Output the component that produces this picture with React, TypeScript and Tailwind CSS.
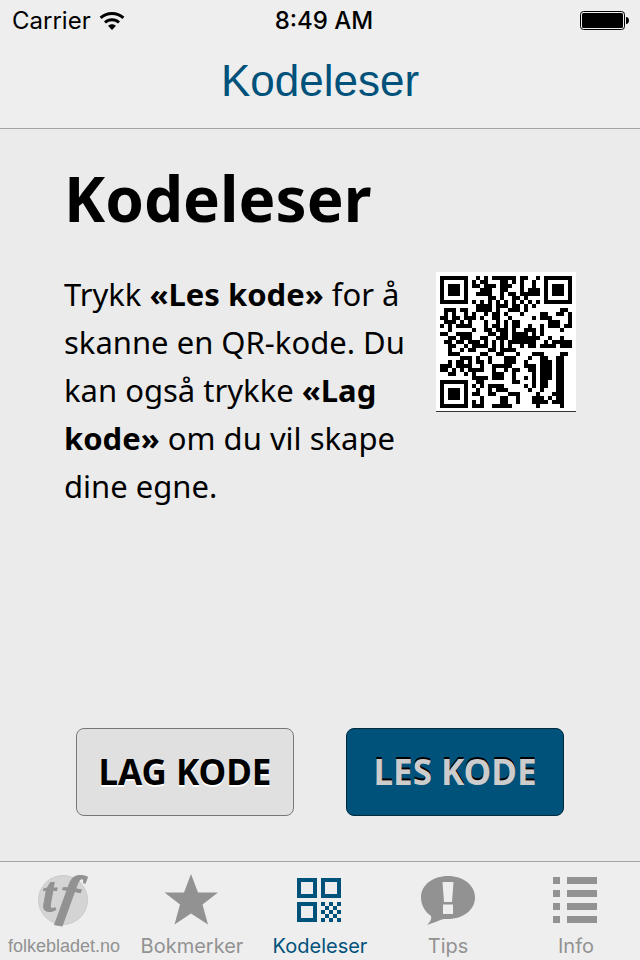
import type { ReactNode } from "react";

const QR_ROWS = [
  "#######..#.#.######.##..#.#######",
  "#.....#.#.##...##.#.#..#..#.....#",
  "#.###.#.##.###.###..#..#..#.###.#",
  "#.###.#...###..##...#.###.#.###.#",
  "#.###.#..####..#.##.#####.#.###.#",
  "#.....#.....##.#..##.#....#.....#",
  "#######.#.#.#.#.#.#.#.#.#.#######",
  ".........####.###.##.#.#.........",
  ".###.##..####.#..###.#........##.",
  ".#.#..#.#..#.##.#...#....##..##.#",
  "##.##.###.#..##..#.....#.###....#",
  ".###.#.#...#..#.#.##.......###..#",
  "#.#.####...#.##.#.##..#..#.###.##",
  "..#.....#..##.###.#..###.#....#..",
  "##..####....##.##.####.#.#.......",
  "..##.###..##..###.#######..#..#..",
  ".##.##.###.#.#.#.#######..#.#####",
  "..##..#.####.#.#.#..#.##.####.###",
  "..#..#.##...##.####..............",
  "..###.....##..##...#...###....##.",
  ".....###.#..#...###...#..##..##..",
  "..#.##.#.##.#...###..#...###.##..",
  "###.####..#..#####...###.###.##..",
  "##.#.#.####..#..#.##..##.###.##..",
  "..##..#.#....###..#....#.###.##..",
  "........####.###..#..#.#.###.##..",
  "#######..##.......##...#.##..##..",
  "#.....#.#.#.####.....#.#.##..##..",
  "#.###.#..#..#.###.....#..#...##..",
  "#.###.#.##..##...###....#...###..",
  "#.###.#...#....##..#...###.#.##..",
  "#.....#.#.#....##..#...####.###..",
  "#######.###..#####......#.....#..",
];

function QrCode() {
  const d = QR_ROWS.map((row, y) =>
    [...row].map((c, x) => (c === "#" ? `M${x * 4 + 4} ${y * 4 + 4}h4v4h-4z` : "")).join("")
  ).join("");
  return (
    <svg
      viewBox="0 0 140 140"
      role="img"
      aria-label="QR-kode"
      className="mt-0.5 w-[140px] shrink-0 self-start bg-white"
      shapeRendering="crispEdges"
    >
      <path d={d} />
      <path d="M0 139h140v1H0z" fill="#333" />
    </svg>
  );
}

function WifiIcon() {
  return (
    <svg width="26" height="20" viewBox="0 0 26 20" fill="none" stroke="black" strokeWidth="3">
      <path d="M1.6 6.8C8 .9 18 .9 24.4 6.8" />
      <path d="M6 11.5c4-3.7 10-3.7 14 0" />
      <path d="M13 19l-4-4.300c2.300-2.100 5.700-2.100 8 0z" fill="black" stroke="none" />
    </svg>
  );
}

function BatteryIcon() {
  return (
    <svg width="49" height="20" viewBox="0 0 49 20">
      <rect x="0.500" y="0.500" width="44" height="18" rx="3" fill="none" stroke="black" />
      <rect x="2" y="2" width="41" height="15" rx="1.500" />
      <path d="M46 6c4 0 4 7 0 7z" />
    </svg>
  );
}

function LogoIcon() {
  return (
    <svg width="56" height="60" viewBox="0 0 56 60" fill="#929292" className="overflow-visible">
      <circle cx="27" cy="30" r="24.500" fill="#d4d4d4" stroke="#cbcbcb" />
      <g className="font-['Liberation_Serif',serif] font-bold italic" stroke="#929292">
        <text x="6" y="41" fontSize="50">
          t
        </text>
        <text x="23" y="44" fontSize="58" transform="rotate(10 31 30)">
          f
        </text>
      </g>
    </svg>
  );
}

function StarIcon() {
  return (
    <svg width="56" height="60" viewBox="0 0 56 60" fill="#929292">
      <path d="M27 4l7 18.500h20L38.500 34.500l5.500 20L27 43.500 10.500 54.500l5.500-20L.5 22.500H20z" />
    </svg>
  );
}

function CodeIcon() {
  return (
    <svg width="46" height="60" viewBox="0 0 46 60" fill="#00527b" shapeRendering="crispEdges">
      <g fill="none" stroke="#00527b" strokeWidth="4">
        <path d="M2 10h16v16H2z" />
        <path d="M26 10h16v16H26z" />
        <path d="M2 34h16v16H2z" />
      </g>
      <path d="M24 32h4v4h-4zM32 32h4v4h-4zM40 32h4v4h-4zM28 36h4v4h-4zM36 36h4v4h-4zM24 40h4v4h-4zM32 40h4v4h-4zM40 40h4v4h-4zM28 44h4v4h-4zM36 44h4v4h-4zM24 48h4v4h-4zM32 48h4v4h-4zM40 48h4v4h-4z" />
    </svg>
  );
}

function TipsIcon() {
  return (
    <svg width="56" height="60" viewBox="0 0 56 60">
      <path
        d="M28 6c15 0 27 9 27 21.500S43 49 28 49h-4c-5 1-10 4-17 6 3-3 5-6 4-9C5 42 1 35 1 27.500 1 15 13 6 28 6z"
        fill="#929292"
      />
      <path d="M22.500 12h11L32 32h-8zM23 34.500h10V44H23z" fill="#eee" />
    </svg>
  );
}

function InfoIcon() {
  return (
    <svg width="46" height="60" viewBox="0 0 46 60" fill="#929292" shapeRendering="crispEdges">
      <path d="M0 7h7v7H0zM0 20h7v7H0zM0 33h7v7H0zM0 46h7v7H0z" />
      <path d="M14 7h30v7H14zM14 20h30v7H14zM14 33h30v7H14zM14 46h30v7H14z" />
    </svg>
  );
}

type TabProps = { label: string; icon: ReactNode; active?: boolean; compact?: boolean };

function Tab({ label, icon, active, compact }: TabProps) {
  return (
    <button
      type="button"
      aria-current={active ? "page" : undefined}
      className={`flex flex-1 flex-col items-center gap-1 pt-2 pb-0.5 ${active ? "text-[#00527b]" : "text-[#929292]"}`}
    >
      {icon}
      <span
        className={
          compact ? "font-['Liberation_Sans',sans-serif] text-lg leading-6" : "text-xl leading-6"
        }
      >
        {label}
      </span>
    </button>
  );
}

export default function App() {
  return (
    <div className="flex min-h-screen flex-col bg-[#ebebeb] font-['Inter',sans-serif] text-black">
      <header className="border-b border-[#a3a3a3] bg-[#eee]">
        <div className="grid h-[42px] grid-cols-3 items-center pr-1 pl-3 text-2xl">
          <div className="flex items-center gap-2">
            <span>Carrier</span>
            <WifiIcon />
          </div>
          <span className="text-center font-medium">8:49 AM</span>
          <div className="flex justify-end pr-[7px]">
            <BatteryIcon />
          </div>
        </div>
        <p className="h-[86px] pt-3.5 text-center font-['Liberation_Sans',sans-serif] text-[44px] leading-[50px] text-[#00527b]">
          Kodeleser
        </p>
      </header>

      <main className="flex flex-1 flex-col px-16 pb-[45px] font-['Noto_Sans',sans-serif]">
        <h1 className="pt-8 text-[62px] leading-[75px] font-bold">Kodeleser</h1>
        <div className="flex justify-between gap-4 pt-[34px]">
          <p className="text-[31px] leading-12">
            Trykk <b>«Les kode»</b> for å skanne en QR-kode. Du kan også trykke <b>«Lag kode»</b> om
            du vil skape dine egne.
          </p>
          <QrCode />
        </div>
        <div className="mt-auto flex justify-between px-3 text-[35px] font-bold">
          <button
            type="button"
            className="h-22 w-[218px] rounded-lg border border-[#777] bg-[#e0e0e0] [text-shadow:0_2px_0_#fff]"
          >
            LAG KODE
          </button>
          <button
            type="button"
            className="h-22 w-[218px] rounded-lg border border-[#00293d] bg-[#00527b] text-[#ccc] [text-shadow:0_-2px_0_#000]"
          >
            LES KODE
          </button>
        </div>
      </main>

      <nav className="flex border-t border-[#a3a3a3] bg-[#eee]">
        <Tab label="folkebladet.no" icon={<LogoIcon />} compact />
        <Tab label="Bokmerker" icon={<StarIcon />} />
        <Tab label="Kodeleser" icon={<CodeIcon />} active />
        <Tab label="Tips" icon={<TipsIcon />} />
        <Tab label="Info" icon={<InfoIcon />} />
      </nav>
    </div>
  );
}
